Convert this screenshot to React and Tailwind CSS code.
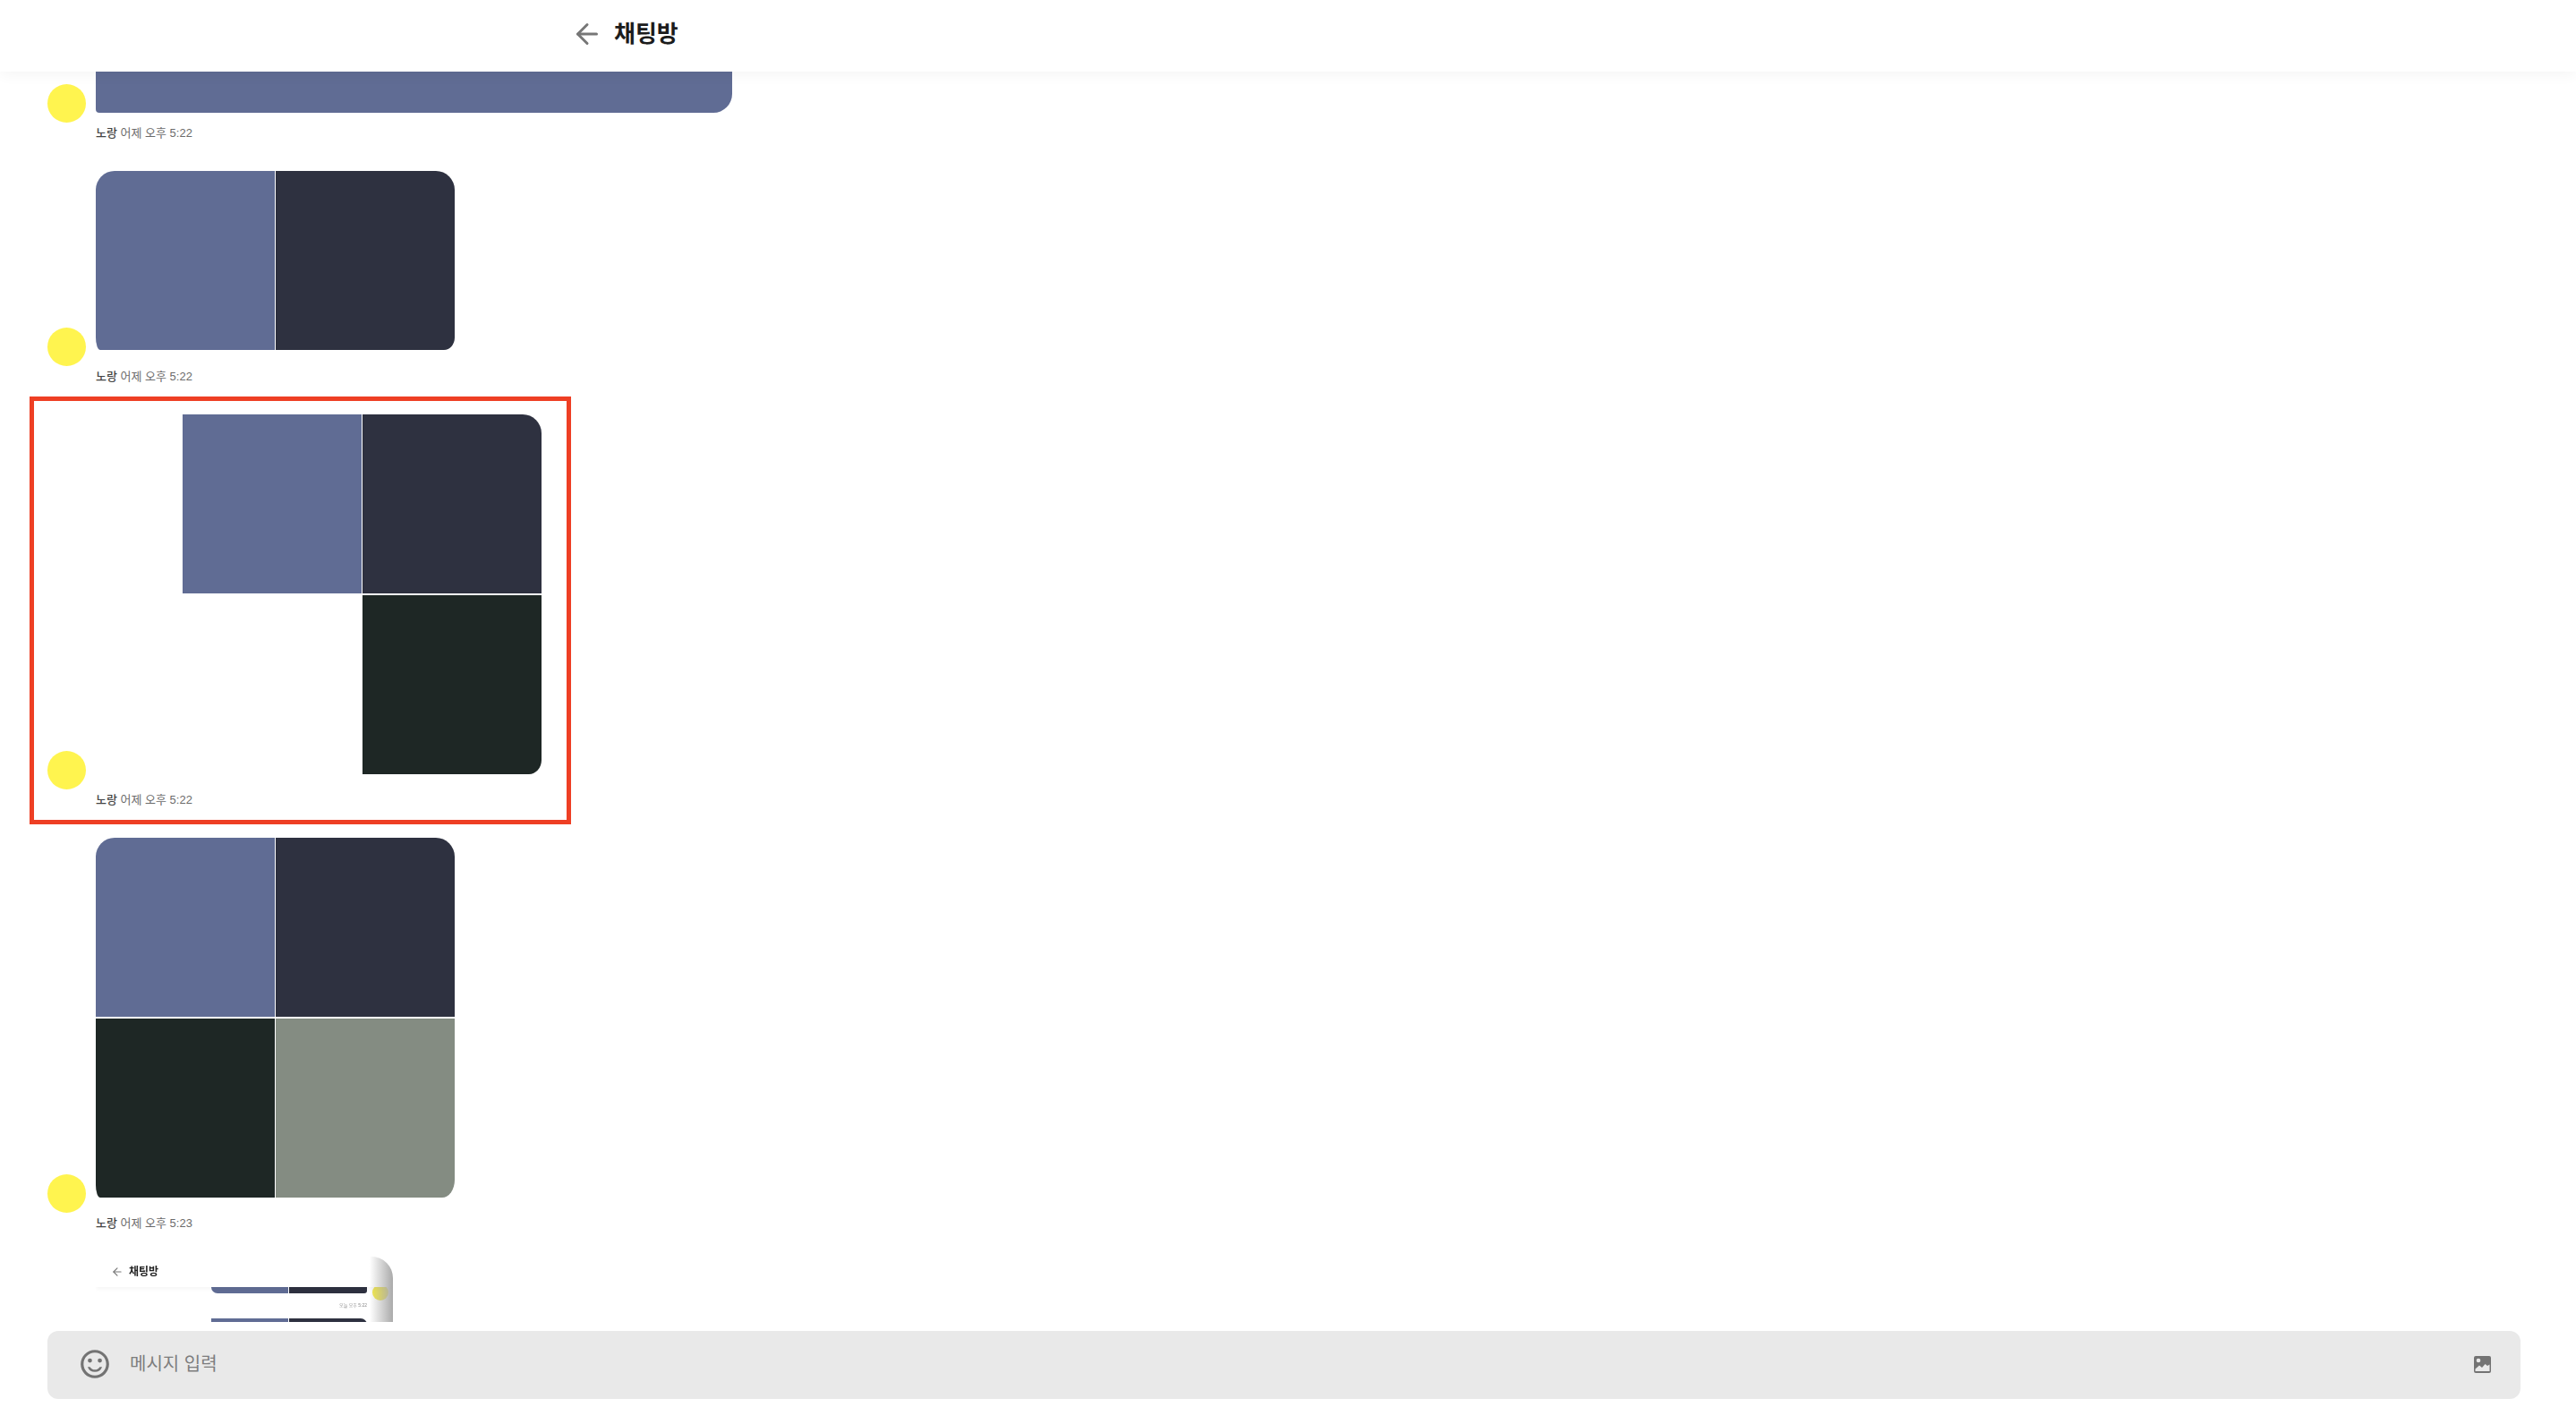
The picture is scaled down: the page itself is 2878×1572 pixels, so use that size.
import React from "react";
import { ArrowLeft } from "lucide-react";
import { MdOutlineSentimentSatisfiedAlt } from "react-icons/md";

const BLUE = "bg-[#606c94]";
const DARK = "bg-[#2e3140]";
const GREEN = "bg-[#1e2725]";
const SAGE = "bg-[#848c82]";

function Meta({ time }) {
  return (
    <div className="ml-[107px] mt-[2px] h-5 text-[13px] leading-5 text-[#6b6b6b]">
      <span className="font-medium text-[#444444]">노랑</span> 어제 오후 {time}
    </div>
  );
}

function Row({ children, gapBelow = "mb-[18px]", indent = "" }) {
  return (
    <div className="flex items-end pl-[53px]">
      <div className="h-[43px] w-[43px] shrink-0 rounded-full bg-[#fff44f]" />
      <div className={`ml-[11px] ${gapBelow} ${indent}`}>{children}</div>
    </div>
  );
}

function Tile({ color, className = "" }) {
  return <div className={`h-[200px] w-[200px] ${color} ${className}`} />;
}

function PhotoIcon() {
  return (
    <svg width="19" height="19" viewBox="0 0 19 19" aria-hidden="true">
      <rect width="19" height="19" rx="2" fill="#737373" />
      <circle cx="5" cy="5" r="2.3" fill="#e9e9e9" />
      <path d="M1.5 17V14.5L6 10.5L9 13L12.5 9L15 11L17.5 9.5V17Z" fill="#e9e9e9" />
    </svg>
  );
}

function NestedShot() {
  return (
    <div className="relative h-[160px] w-[332px] overflow-hidden rounded-tr-[24px] bg-white blur-[0.4px]">
      <div className="relative z-10 flex h-[34px] items-center bg-white pl-[17px] shadow-[0_1px_6px_rgba(0,0,0,0.06)]">
        <ArrowLeft size={14} color="#777777" strokeWidth={2} />
        <span className="ml-[6px] text-[12px] font-bold text-[#222222]">채팅방</span>
      </div>
      <div className="flex justify-end pr-[5px]">
        <div className="flex flex-col items-end">
          <div className="flex gap-px">
            <div className={`h-[7px] w-[86px] rounded-bl-[7px] ${BLUE}`} />
            <div className={`h-[7px] w-[87px] rounded-br-[3px] ${DARK}`} />
          </div>
          <div className="mt-[9px] h-[8px] text-[5px] leading-[8px] text-[#8a8a8a]">오늘 오후 5:22</div>
          <div className="mt-[11px] flex gap-px">
            <div className={`h-[60px] w-[86px] ${BLUE}`} />
            <div className={`h-[60px] w-[87px] rounded-tr-[7px] ${DARK}`} />
          </div>
        </div>
        <div className="ml-[6px] -mt-[3px] h-[18px] w-[18px] rounded-full bg-[#f4ea45]" />
      </div>
      <div className="absolute inset-y-0 right-0 z-20 w-[26px] bg-gradient-to-r from-transparent to-[#aaaaaa]" />
    </div>
  );
}

export default function App() {
  return (
    <div className="flex h-screen w-full flex-col overflow-hidden bg-white font-['Liberation_Sans','Noto_Sans_CJK_KR',sans-serif]">
      <header className="relative z-10 flex h-20 shrink-0 items-center bg-white pb-1 pl-[638px] shadow-[0_2px_16px_rgba(0,0,0,0.05)]">
        <ArrowLeft size={36} color="#777777" strokeWidth={2} />
        <h1 className="ml-[12px] text-[26px] font-bold leading-none text-[#1c1c1c]">채팅방</h1>
      </header>

      <main className="min-h-0 flex-1 overflow-hidden">
        <div className="mb-[32px]">
          <Row gapBelow="mb-[11px]">
            <div className={`h-[46px] w-[711px] rounded-bl-[4px] rounded-br-[21px] ${BLUE}`} />
          </Row>
          <Meta time="5:22" />
        </div>

        <div className="mb-[32px]">
          <Row>
            <div className="grid grid-cols-[200px_200px] gap-px overflow-hidden rounded-tl-[21px] rounded-tr-[21px] rounded-bl-[5px_14px] rounded-br-[12px_14px]">
              <Tile color={BLUE} />
              <Tile color={DARK} />
            </div>
          </Row>
          <Meta time="5:22" />
        </div>

        <div className="relative mb-[32px]">
          <div className="pointer-events-none absolute -top-[20px] left-[33px] h-[478px] w-[605px] border-[5px] border-[#ee3f24]" />
          <Row gapBelow="mb-[17px]" indent="pl-[97px]">
            <div className="grid grid-cols-[200px_200px] gap-x-px gap-y-[2px]">
              <Tile color={BLUE} />
              <Tile color={DARK} className="rounded-tr-[21px]" />
              <div />
              <Tile color={GREEN} className="rounded-br-[14px_16px]" />
            </div>
          </Row>
          <Meta time="5:22" />
        </div>

        <div className="mb-[27px]">
          <Row gapBelow="mb-[17px]">
            <div className="grid grid-cols-[200px_200px] gap-x-px gap-y-[2px] overflow-hidden rounded-tl-[21px] rounded-tr-[21px] rounded-bl-[5px_14px] rounded-br-[14px_20px]">
              <Tile color={BLUE} />
              <Tile color={DARK} />
              <Tile color={GREEN} />
              <Tile color={SAGE} />
            </div>
          </Row>
          <Meta time="5:23" />
        </div>

        <div className="ml-[107px]">
          <NestedShot />
        </div>
      </main>

      <footer className="relative shrink-0 bg-white pb-[9px] pl-[53px] pr-[62px] pt-[10px]">
        <div className="flex h-[76px] items-center rounded-[12px] bg-[#e9e9e9] pb-[2px] pl-[34px] pr-[33px]">
          <MdOutlineSentimentSatisfiedAlt size={38} color="#737373" />
          <span className="ml-[20px] flex-1 text-[20px] text-[#7d7d7d]">메시지 입력</span>
          <PhotoIcon />
        </div>
      </footer>
    </div>
  );
}
